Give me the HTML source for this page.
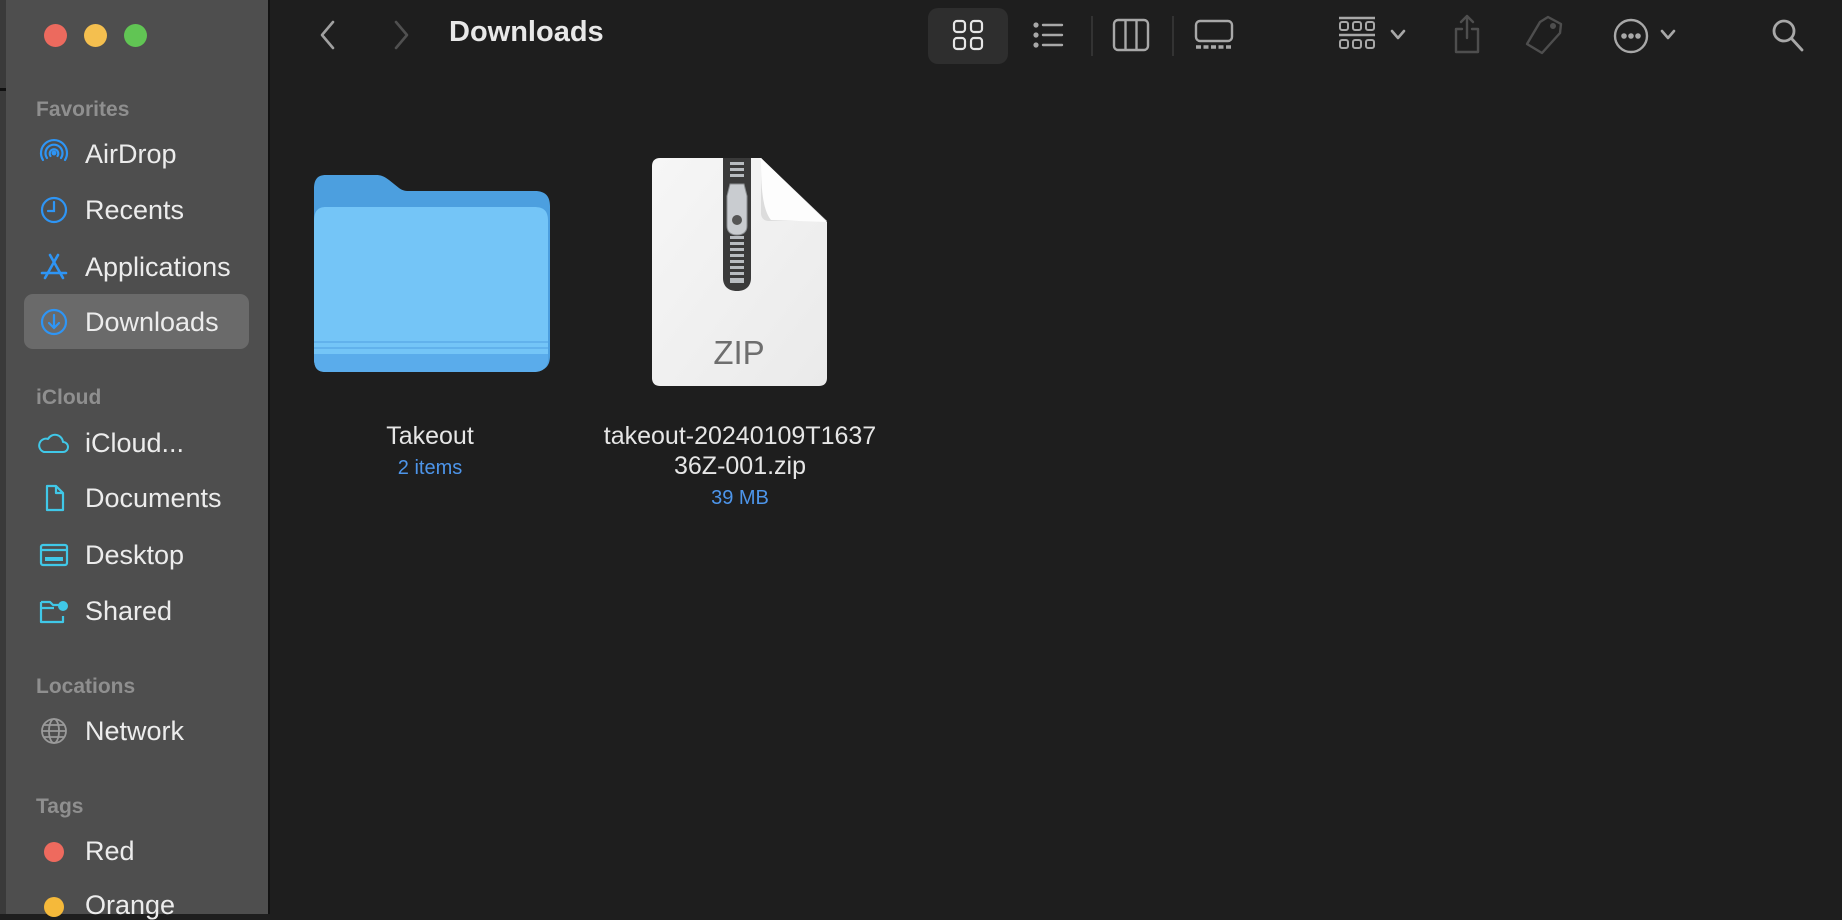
<!DOCTYPE html>
<html><head><meta charset="utf-8"><style>
*{margin:0;padding:0;box-sizing:border-box}
body{width:1842px;height:914px;background:#1e1e1e;overflow:hidden;position:relative;font-family:"Liberation Sans",sans-serif}
#sb{position:absolute;left:0;top:0;width:270px;height:914px;background:#4e4e4e;border-right:2px solid #121212}
#strip{position:absolute;left:0;top:0;width:6px;height:914px;background:#3a3a3a}
.t{position:absolute;white-space:nowrap}
.sec{position:absolute;left:36px;font-size:21px;font-weight:bold;color:#8f8f8f}
.it{position:absolute;left:85px;font-size:27px;color:#ececec;line-height:30px}
.ic{position:absolute;left:38px;width:32px;height:32px}
.lbl{position:absolute;color:#e6e6e6;font-size:25px;text-align:center;line-height:30px}
.sub{color:#4d95ea;font-size:20px}
</style></head><body>
<div id="sb"></div>
<div id="strip"></div>
<div style="position:absolute;left:0;top:88px;width:6px;height:3px;background:#111"></div>
<div style="position:absolute;left:44px;top:24px;width:23px;height:23px;border-radius:50%;background:#ec6a5e"></div>
<div style="position:absolute;left:84px;top:24px;width:23px;height:23px;border-radius:50%;background:#f4bf4f"></div>
<div style="position:absolute;left:124px;top:24px;width:23px;height:23px;border-radius:50%;background:#61c554"></div>

<div class="sec" style="top:98px">Favorites</div>
<div style="position:absolute;left:24px;top:294px;width:225px;height:55px;border-radius:9px;background:#6a6a6a"></div>

<svg class="ic" style="top:138px" viewBox="0 0 32 32" fill="none" stroke="#2e95f5" stroke-width="2.2" stroke-linecap="round"><path d="M5 22a13 13 0 1 1 22 0"/><path d="M9 20a8.5 8.5 0 1 1 14 0"/><path d="M12.5 18a4.3 4.3 0 1 1 7 0"/><circle cx="16" cy="15" r="1.4" fill="#2e95f5"/></svg>
<div class="it" style="top:139px">AirDrop</div>

<svg class="ic" style="top:194px" viewBox="0 0 32 32" fill="none" stroke="#2e95f5" stroke-width="2.2" stroke-linecap="round"><circle cx="16" cy="16" r="12"/><path d="M16 8v9h-6"/></svg>
<div class="it" style="top:195px">Recents</div>

<svg class="ic" style="top:251px" viewBox="0 0 32 32" fill="none" stroke="#2e95f5" stroke-width="2.6" stroke-linecap="round"><path d="M12 4l13 23M20 4L7 27M4 22h24"/></svg>
<div class="it" style="top:252px">Applications</div>

<svg class="ic" style="top:306px" viewBox="0 0 32 32" fill="none" stroke="#2e95f5" stroke-width="2.2" stroke-linecap="round"><circle cx="16" cy="16" r="12"/><path d="M16 9v13M11 17l5 5 5-5"/></svg>
<div class="it" style="top:307px">Downloads</div>

<div class="sec" style="top:386px">iCloud</div>

<svg class="ic" style="top:427px;left:36px;width:34px" viewBox="0 0 34 32" fill="none" stroke="#40c8e8" stroke-width="2" stroke-linejoin="round"><path d="M8 25h19a5 5 0 0 0 0-10 8 8 0 0 0-15-3 6 6 0 0 0-4 13z"/></svg>
<div class="it" style="top:428px">iCloud...</div>

<svg class="ic" style="top:482px" viewBox="0 0 32 32" fill="none" stroke="#40c8e8" stroke-width="2.2" stroke-linejoin="round"><path d="M9 4h9l7 7v17H9z"/><path d="M18 4v7h7"/></svg>
<div class="it" style="top:483px">Documents</div>

<svg class="ic" style="top:539px" viewBox="0 0 32 32" fill="none" stroke="#40c8e8" stroke-width="2.2"><rect x="3" y="6" width="26" height="20" rx="2"/><path d="M3 11h26"/><rect x="7" y="18" width="18" height="4" fill="#40c8e8" stroke="none"/></svg>
<div class="it" style="top:540px">Desktop</div>

<svg class="ic" style="top:595px" viewBox="0 0 32 32" fill="none" stroke="#40c8e8" stroke-width="2.2" stroke-linejoin="round"><path d="M3 7h9l3 3h7M3 7v20h22v-6M3 13h13"/><circle cx="25" cy="11" r="5" fill="#40c8e8" stroke="none"/></svg>
<div class="it" style="top:596px">Shared</div>

<div class="sec" style="top:675px">Locations</div>
<svg class="ic" style="top:715px" viewBox="0 0 32 32" fill="none" stroke="#9a9a9a" stroke-width="1.8"><circle cx="16" cy="16" r="12"/><ellipse cx="16" cy="16" rx="5" ry="12"/><path d="M4 16h24M6 10h20M6 22h20"/></svg>
<div class="it" style="top:716px">Network</div>

<div class="sec" style="top:795px">Tags</div>
<div style="position:absolute;left:44px;top:842px;width:20px;height:20px;border-radius:50%;background:#ee6a5e"></div>
<div class="it" style="top:836px">Red</div>
<div style="position:absolute;left:44px;top:897px;width:20px;height:20px;border-radius:50%;background:#f5b93a"></div>
<div class="it" style="top:890px">Orange</div>

<svg style="position:absolute;left:316px;top:19px" width="24" height="32" viewBox="0 0 24 32" fill="none" stroke="#a0a0a0" stroke-width="2.6" stroke-linecap="round" stroke-linejoin="round"><path d="M17 3L6 16l11 13"/></svg>
<svg style="position:absolute;left:389px;top:19px" width="24" height="32" viewBox="0 0 24 32" fill="none" stroke="#505050" stroke-width="2.6" stroke-linecap="round" stroke-linejoin="round"><path d="M7 3l11 13L7 29"/></svg>
<div class="t" style="left:449px;top:16px;font-size:29px;font-weight:bold;color:#e8e8e8">Downloads</div>

<div style="position:absolute;left:928px;top:8px;width:80px;height:56px;border-radius:10px;background:#2e2e2e"></div>
<svg style="position:absolute;left:950px;top:17px" width="36" height="36" viewBox="0 0 36 36" fill="none" stroke="#e6e6e6" stroke-width="2.2"><rect x="4" y="4" width="11" height="11" rx="3"/><rect x="21" y="4" width="11" height="11" rx="3"/><rect x="4" y="21" width="11" height="11" rx="3"/><rect x="21" y="21" width="11" height="11" rx="3"/></svg>
<svg style="position:absolute;left:1031px;top:17px" width="36" height="36" viewBox="0 0 36 36" fill="none" stroke="#a8a8a8" stroke-width="2.4" stroke-linecap="round"><path d="M12 8h19M12 18h19M12 28h19"/><circle cx="5" cy="8" r="1.4" fill="#a8a8a8"/><circle cx="5" cy="18" r="1.4" fill="#a8a8a8"/><circle cx="5" cy="28" r="1.4" fill="#a8a8a8"/></svg>
<div style="position:absolute;left:1091px;top:16px;width:2px;height:40px;background:#333"></div>
<svg style="position:absolute;left:1112px;top:17px" width="38" height="36" viewBox="0 0 38 36" fill="none" stroke="#a8a8a8" stroke-width="2.4"><rect x="2" y="3" width="34" height="30" rx="4"/><path d="M13.5 3v30M24.5 3v30"/></svg>
<div style="position:absolute;left:1172px;top:16px;width:2px;height:40px;background:#333"></div>
<svg style="position:absolute;left:1194px;top:18px" width="40" height="34" viewBox="0 0 40 34" fill="none" stroke="#a8a8a8" stroke-width="2.4"><rect x="2" y="3" width="36" height="20" rx="4"/><path d="M2 29h36" stroke-dasharray="5 2.5" stroke-width="3.5"/></svg>

<svg style="position:absolute;left:1337px;top:16px" width="40" height="38" viewBox="0 0 40 38" fill="none" stroke="#a8a8a8" stroke-width="2"><path d="M2 2h36M2 19h36" stroke-width="2.4"/><rect x="3" y="6" width="8" height="8" rx="2"/><rect x="16" y="6" width="8" height="8" rx="2"/><rect x="29" y="6" width="8" height="8" rx="2"/><rect x="3" y="24" width="8" height="8" rx="2"/><rect x="16" y="24" width="8" height="8" rx="2"/><rect x="29" y="24" width="8" height="8" rx="2"/></svg>
<svg style="position:absolute;left:1389px;top:28px" width="18" height="14" viewBox="0 0 18 14" fill="none" stroke="#a8a8a8" stroke-width="2.6" stroke-linecap="round" stroke-linejoin="round"><path d="M3 3l6 7 6-7"/></svg>
<svg style="position:absolute;left:1452px;top:14px" width="30" height="40" viewBox="0 0 30 40" fill="none" stroke="#4e4e4e" stroke-width="2.4" stroke-linecap="round" stroke-linejoin="round"><path d="M15 2v22M9 8l6-6 6 6M10 15H4v23h22V15h-6"/></svg>
<svg style="position:absolute;left:1524px;top:14px" width="40" height="42" viewBox="0 0 40 42" fill="none" stroke="#4e4e4e" stroke-width="2.4" stroke-linejoin="round"><path d="M24 3l13 7-1 9-18 20-15-9 13-22z"/><circle cx="29" cy="12" r="1.8" fill="#4e4e4e"/></svg>
<svg style="position:absolute;left:1612px;top:17px" width="38" height="38" viewBox="0 0 38 38" fill="none" stroke="#a8a8a8" stroke-width="2.4"><circle cx="19" cy="19" r="16"/><circle cx="12" cy="19" r="1.6" fill="#a8a8a8"/><circle cx="19" cy="19" r="1.6" fill="#a8a8a8"/><circle cx="26" cy="19" r="1.6" fill="#a8a8a8"/></svg>
<svg style="position:absolute;left:1659px;top:28px" width="18" height="14" viewBox="0 0 18 14" fill="none" stroke="#a8a8a8" stroke-width="2.6" stroke-linecap="round" stroke-linejoin="round"><path d="M3 3l6 7 6-7"/></svg>
<svg style="position:absolute;left:1770px;top:17px" width="36" height="36" viewBox="0 0 36 36" fill="none" stroke="#a8a8a8" stroke-width="2.8" stroke-linecap="round"><circle cx="14" cy="14" r="10"/><path d="M21.5 21.5L32 33"/></svg>

<svg style="position:absolute;left:312px;top:172px" width="240" height="202" viewBox="0 0 240 202">
<path d="M14 3h50c6 0 9 2 13 5l10 8c3 2 5 3 10 3h126c10 0 15 5 15 15v150c0 10-5 15-15 15H14C5 199 2 194 2 185V17C2 8 5 3 14 3z" fill="#4c9fdf"/>
<path d="M14 35h208c10 0 14 4 14 14v136c0 10-5 15-15 15H14C5 200 2 195 2 186V49c0-10 4-14 12-14z" fill="#74c5f7"/>
<path d="M2 170h234M2 176h234" stroke="#62b2ec" stroke-width="2"/>
<path d="M2 182h234v4c0 10-5 14-15 14H14C5 200 2 196 2 186z" fill="#5aaceb"/>
</svg>

<svg style="position:absolute;left:652px;top:156px" width="178" height="232" viewBox="0 0 178 232">
<defs><linearGradient id="g" x1="0" y1="0" x2="1" y2="1"><stop offset="0" stop-color="#f6f6f6"/><stop offset="1" stop-color="#eaeaea"/></linearGradient></defs>
<path d="M8 2h101l66 64v156c0 5-3 8-8 8H8c-5 0-8-3-8-8V10c0-5 3-8 8-8z" fill="url(#g)"/>
<path d="M109 2v55c0 5 3 8 8 8h58z" fill="#dcdcdc"/>
<path d="M109 2c0 20 0 50 10 62 l56 2z" fill="#fdfdfd"/>
<path d="M71 2h28v120c0 8-5 13-14 13s-14-5-14-13z" fill="#3a3a3a"/>
<g fill="#b8bcc0"><rect x="78" y="6" width="14" height="3"/><rect x="78" y="12" width="14" height="3"/><rect x="78" y="18" width="14" height="3"/><rect x="78" y="80" width="14" height="3"/><rect x="78" y="86" width="14" height="3"/><rect x="78" y="92" width="14" height="3"/><rect x="78" y="98" width="14" height="3"/><rect x="78" y="104" width="14" height="3"/><rect x="78" y="110" width="14" height="3"/><rect x="78" y="116" width="14" height="3"/><rect x="78" y="122" width="14" height="5"/></g>
<path d="M78 28h14l3 12v30c0 6-4 9-10 9s-10-3-10-9V40z" fill="#c9ccd0" stroke="#8a8d90"/>
<circle cx="85" cy="64" r="5" fill="#555"/>
<text x="87" y="208" text-anchor="middle" font-family="Liberation Sans" font-size="33" fill="#6e6e6e">ZIP</text>
</svg>

<div class="lbl" style="left:330px;top:421px;width:200px">Takeout<br><span class="sub">2 items</span></div>
<div class="lbl" style="left:570px;top:421px;width:340px">takeout-20240109T1637<br>36Z-001.zip<br><span class="sub">39 MB</span></div>
</body></html>
